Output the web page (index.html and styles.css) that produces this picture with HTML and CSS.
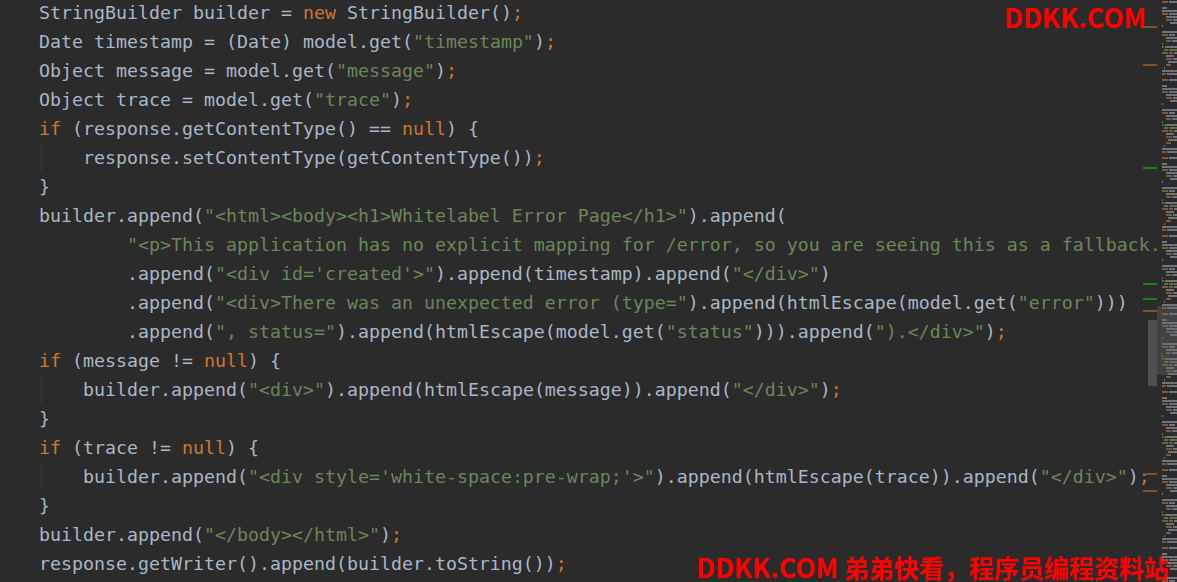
FILE: index.html
```html
<!DOCTYPE html>
<html lang="zh">
<head>
<meta charset="utf-8">
<title>Editor</title>
<link rel="stylesheet" href="styles.css">
</head>
<body>
<div class="editor">
  <div class="code">
    <div class="ln">StringBuilder builder = <span class="kw">new</span> StringBuilder()<span class="kw">;</span></div>
    <div class="ln">Date timestamp = (Date) model.get(<span class="str">"timestamp"</span>)<span class="kw">;</span></div>
    <div class="ln">Object message = model.get(<span class="str">"message"</span>)<span class="kw">;</span></div>
    <div class="ln">Object trace = model.get(<span class="str">"trace"</span>)<span class="kw">;</span></div>
    <div class="ln"><span class="kw">if</span> (response.getContentType() == <span class="kw">null</span>) {</div>
    <div class="ln guide">    response.setContentType(getContentType())<span class="kw">;</span></div>
    <div class="ln">}</div>
    <div class="ln">builder.append(<span class="str">"&lt;html&gt;&lt;body&gt;&lt;h1&gt;Whitelabel Error Page&lt;/h1&gt;"</span>).append(</div>
    <div class="ln">        <span class="str">"&lt;p&gt;This application has no explicit mapping for /error, so you are seeing this as a fallback.&lt;/p&gt;"</span>)</div>
    <div class="ln">        .append(<span class="str">"&lt;div id='created'&gt;"</span>).append(timestamp).append(<span class="str">"&lt;/div&gt;"</span>)</div>
    <div class="ln">        .append(<span class="str">"&lt;div&gt;There was an unexpected error (type="</span>).append(htmlEscape(model.get(<span class="str">"error"</span>)))</div>
    <div class="ln">        .append(<span class="str">", status="</span>).append(htmlEscape(model.get(<span class="str">"status"</span>))).append(<span class="str">").&lt;/div&gt;"</span>)<span class="kw">;</span></div>
    <div class="ln"><span class="kw">if</span> (message != <span class="kw">null</span>) {</div>
    <div class="ln guide">    builder.append(<span class="str">"&lt;div&gt;"</span>).append(htmlEscape(message)).append(<span class="str">"&lt;/div&gt;"</span>)<span class="kw">;</span></div>
    <div class="ln">}</div>
    <div class="ln"><span class="kw">if</span> (trace != <span class="kw">null</span>) {</div>
    <div class="ln guide">    builder.append(<span class="str">"&lt;div style='white-space:pre-wrap;'&gt;"</span>).append(htmlEscape(trace)).append(<span class="str">"&lt;/div&gt;"</span>)<span class="kw">;</span></div>
    <div class="ln">}</div>
    <div class="ln">builder.append(<span class="str">"&lt;/body&gt;&lt;/html&gt;"</span>)<span class="kw">;</span></div>
    <div class="ln">response.getWriter().append(builder.toString())<span class="kw">;</span></div>
  </div>

  <div class="side">
    <div class="mapbg"></div>
    <svg class="minimap" width="15" height="582" viewBox="0 0 15 582" xmlns="http://www.w3.org/2000/svg">
      <defs>
        <pattern id="mm" x="0" y="1" width="15" height="78" patternUnits="userSpaceOnUse">
          <rect x="0" y="0" width="6" height="2" fill="#7b5a3b"/><rect x="7" y="0" width="8" height="2" fill="#6e747b"/>
          <rect x="0" y="6" width="5" height="2" fill="#6e747b"/>
          <rect x="0" y="9" width="15" height="2" fill="#6e747b"/>
          <rect x="0" y="12" width="6" height="2" fill="#7b5a3b"/><rect x="7" y="12" width="8" height="2" fill="#6e747b"/>
          <rect x="4" y="15" width="11" height="2" fill="#6e747b"/>
          <rect x="4" y="18" width="6" height="2" fill="#7b5a3b"/><rect x="11" y="18" width="4" height="2" fill="#6e747b"/>
          <rect x="8" y="21" width="7" height="2" fill="#6e747b"/>
          <rect x="0" y="24" width="1" height="2" fill="#6e747b"/>
          <rect x="0" y="30" width="15" height="2" fill="#6e747b"/>
          <rect x="0" y="33" width="6" height="2" fill="#7b5a3b"/><rect x="7" y="33" width="6" height="2" fill="#6e747b"/>
          <rect x="4" y="36" width="11" height="2" fill="#6e747b"/>
          <rect x="4" y="39" width="5" height="2" fill="#7b5a3b"/><rect x="10" y="39" width="5" height="2" fill="#6e747b"/>
          <rect x="0" y="42" width="1" height="2" fill="#6e747b"/>
          <rect x="0" y="45" width="2" height="2" fill="#56743f"/><rect x="3" y="45" width="12" height="2" fill="#6e747b"/>
          <rect x="2" y="48" width="4" height="2" fill="#56743f"/><rect x="7" y="48" width="8" height="2" fill="#56743f"/>
          <rect x="0" y="51" width="6" height="2" fill="#7b5a3b"/><rect x="7" y="51" width="4" height="2" fill="#7b5a3b"/><rect x="12" y="51" width="3" height="2" fill="#6e747b"/>
          <rect x="4" y="54" width="8" height="2" fill="#6e747b"/>
          <rect x="4" y="57" width="6" height="2" fill="#7b5a3b"/><rect x="11" y="57" width="4" height="2" fill="#6e747b"/>
          <rect x="6" y="60" width="9" height="2" fill="#6e747b"/>
          <rect x="4" y="63" width="5" height="2" fill="#7b5a3b"/>
          <rect x="2" y="66" width="1" height="2" fill="#6e747b"/>
          <rect x="0" y="69" width="15" height="2" fill="#6e747b"/>
          <rect x="0" y="72" width="4" height="2" fill="#7b5a3b"/><rect x="5" y="72" width="10" height="2" fill="#6e747b"/>
        </pattern>
      </defs>
      <rect x="0" y="0" width="15" height="582" fill="url(#mm)"/>
    </svg>
    <div class="viewport"></div>
    <div class="thumb"></div>
    <div class="mark orange" style="top:26px"></div>
    <div class="mark orange" style="top:64px"></div>
    <div class="mark green" style="top:167px"></div>
    <div class="mark green" style="top:283px"></div>
    <div class="mark green" style="top:298px"></div>
    <div class="mark orange" style="top:310px"></div>
    <div class="mark orange" style="top:473px"></div>
    <div class="mark orange" style="top:490px"></div>
  </div>

  <div class="wm wm-top"><span class="lat">DDKK.COM</span></div>
  <div class="wm wm-bottom"><span class="lat">DDKK.COM</span> 弟弟快看，程序员编程资料站</div>
</div>
</body>
</html>
```

FILE: styles.css
```css
html, body {
  margin: 0;
  padding: 0;
  background: #2b2b2b;
  overflow: hidden;
}

.editor {
  position: relative;
  width: 1177px;
  height: 582px;
  overflow: hidden;
  background: #2b2b2b;
}

.code {
  margin-top: -2px;
  font-family: "DejaVu Sans Mono", "Liberation Mono", monospace;
  font-size: 18.27px;
  line-height: 29px;
  color: #a9b7c6;
}

.ln {
  padding-left: 39px;
  height: 29px;
  white-space: pre;
}

.guide {
  background: linear-gradient(#3a3a3a, #3a3a3a) no-repeat 41px 0 / 1px 100%;
}

.kw { color: #cc7832; }
.str { color: #6a8759; }

.side {
  position: absolute;
  top: 0;
  right: 0;
  width: 35px;
  height: 582px;
}

.mapbg {
  position: absolute;
  top: 0;
  left: 16px;
  width: 19px;
  height: 582px;
  background: #2b2b2b;
}

.minimap {
  position: absolute;
  top: 0;
  left: 20px;
  display: block;
}

.viewport {
  position: absolute;
  left: 15px;
  top: 306px;
  width: 20px;
  height: 69px;
  background: rgba(110, 110, 110, 0.35);
}

.thumb {
  position: absolute;
  left: 6px;
  top: 320px;
  width: 9px;
  height: 66px;
  background: #4f4f4f;
}

.mark {
  position: absolute;
  left: 1px;
  width: 14px;
  height: 2px;
}
.mark.orange { background: #7a5434; }
.mark.green { background: #1f7d1f; }

.wm {
  position: absolute;
  color: #ff0000;
  font-family: "Noto Sans CJK SC", "Liberation Sans", sans-serif;
  font-weight: 700;
  font-size: 25px;
  line-height: 30px;
  white-space: nowrap;
}
.wm .lat {
  font-size: 26.5px;
}
.wm-top {
  left: 1004px;
  top: 2px;
}
.wm-bottom {
  left: 696px;
  top: 552px;
}
```
